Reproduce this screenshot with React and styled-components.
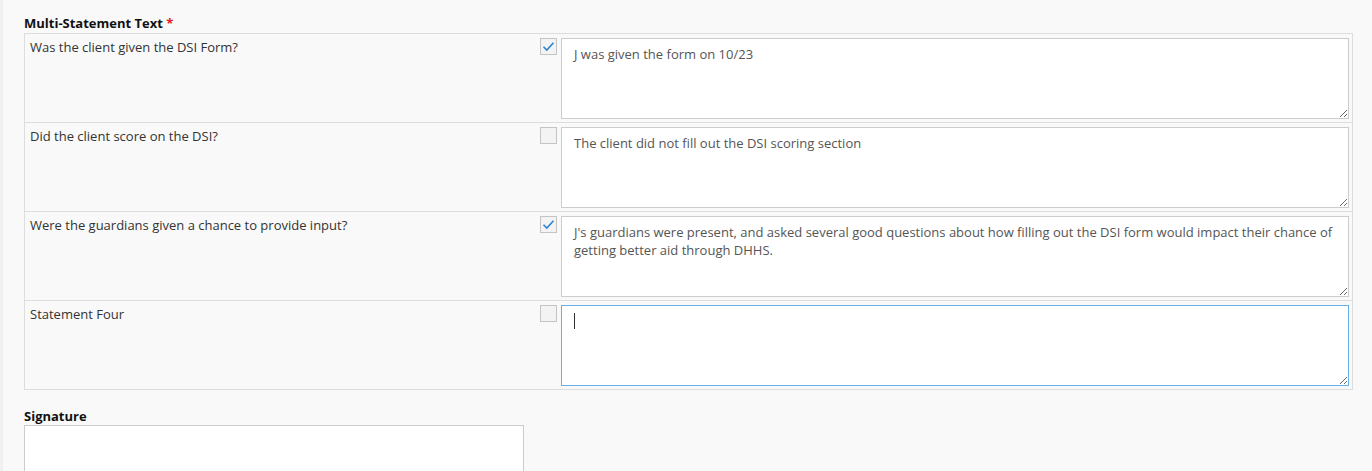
import React from 'react'
import styled, { createGlobalStyle } from 'styled-components';

const GlobalStyle = createGlobalStyle`
    body{
        margin:0;
        background:#f9f9f9;
        font-family: "Open Sans", "Liberation Sans", sans-serif;
        font-size:13px;
        color:#333;
    }
`;

const statements = [
    { label: 'Was the client given the DSI Form?', checked: true, text: 'J was given the form on 10/23' },
    { label: 'Did the client score on the DSI?', checked: false, text: 'The client did not fill out the DSI scoring section' },
    { label: 'Were the guardians given a chance to provide input?', checked: true, text: "J's guardians were present, and asked several good questions about how filling out the DSI form would impact their chance of getting better aid through DHHS." },
    { label: 'Statement Four', checked: false, text: '', focused: true },
];

function App() {
  return (
    <PageStyled>
        <GlobalStyle />
        <FieldLabel>
            Multi-Statement Text <Required>*</Required>
        </FieldLabel>
        <StatementTable>
            {statements.map((s, i) => {
                return <StatementRow key={i}>
                    <StatementLabel>{s.label}</StatementLabel>
                    <CheckBox $checked={s.checked}>
                        {s.checked && (
                            <svg width="13" height="13" viewBox="0 0 13 13">
                                <path d="M1.5 6.8 L4.8 10 L11.5 2.8" fill="none" stroke="#2a84d2" strokeWidth="1.6" />
                            </svg>
                        )}
                    </CheckBox>
                    <AnswerWrap>
                        <Answer
                            $focused={s.focused}
                            defaultValue={s.text}
                            spellCheck={false}
                        />
                        {s.focused && <Caret />}
                    </AnswerWrap>
                </StatementRow>
            })}
        </StatementTable>
        <SignatureLabel>Signature</SignatureLabel>
        <SignatureBox />
    </PageStyled>
  )
}

const PageStyled = styled.div`
    min-height:100vh;
    box-sizing:border-box;
    border-left:3px solid #f0f0f0;
    padding:14px 19px 0 21px;
`;

const FieldLabel = styled.div`
    font-weight:700;
    line-height:18px;
    color:#111;
`;

const Required = styled.span`
    color:#e02020;
`;

const StatementTable = styled.div`
    margin-top:1px;
    border:1px solid #ddd;
    background:#f9f9f9;
`;

const StatementRow = styled.div`
    display:flex;
    align-items:flex-start;
    padding:4px 3px 3px 0;
    & + &{
        border-top:1px solid #ddd;
    }
`;

const StatementLabel = styled.div`
    flex:1;
    padding:0 6px 0 5px;
    line-height:18px;
    color:#333;
`;

const CheckBox = styled.div`
    width:15px;
    height:15px;
    border:1px solid #c4c4c4;
    background:#f3f3f3;
    display:flex;
    align-items:center;
    justify-content:center;
    margin-right:4px;
`;

const AnswerWrap = styled.div`
    position:relative;
`;

const Answer = styled.textarea`
    width:788px;
    height:81px;
    box-sizing:border-box;
    border:1px solid ${p => p.$focused ? '#66afe9' : '#ccc'};
    border-radius:0;
    background:#fff;
    padding:6px 12px;
    font-family: "Open Sans", "Liberation Sans", sans-serif;
    font-size:13px;
    line-height:18px;
    color:#555;
    outline:none;
    margin:0;
    display:block;
`;

const Caret = styled.span`
    position:absolute;
    left:13px;
    top:8px;
    width:1px;
    height:16px;
    background:#333;
`;

const SignatureLabel = styled.div`
    margin-top:17px;
    font-weight:700;
    line-height:18px;
    color:#111;
`;

const SignatureBox = styled.div`
    width:500px;
    height:60px;
    box-sizing:border-box;
    border:1px solid #ccc;
    background:#fff;
`;

export default App
